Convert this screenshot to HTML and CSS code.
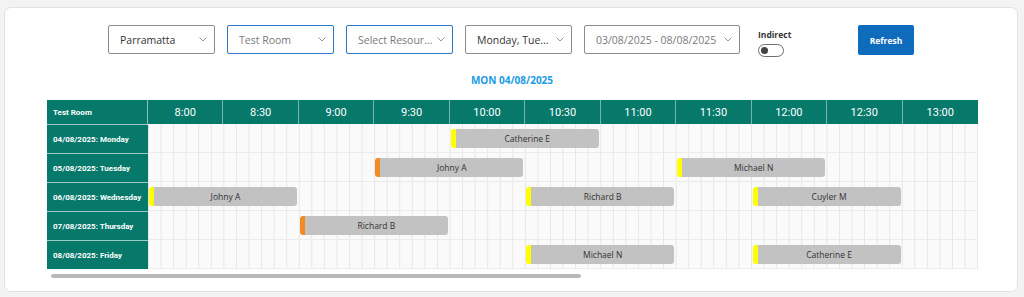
FILE: index.html
```html
<!DOCTYPE html>
<html>
<head>
<meta charset="utf-8">
<link rel="stylesheet" href="styles.css">
</head>
<body>
<div class="card">
  <div class="toolbar">
    <div class="select w107">
      <span class="val">Parramatta</span>
      <svg class="chev" width="8" height="5" viewBox="0 0 8 5"><path d="M0.5 0.5 L4 4 L7.5 0.5" fill="none" stroke="#8a8a8a" stroke-width="0.9"/></svg>
    </div>
    <div class="select w107 focus">
      <span class="val ph">Test Room</span>
      <svg class="chev" width="8" height="5" viewBox="0 0 8 5"><path d="M0.5 0.5 L4 4 L7.5 0.5" fill="none" stroke="#8a8a8a" stroke-width="0.9"/></svg>
    </div>
    <div class="select w107 focus">
      <span class="val ph">Select Resour...</span>
      <svg class="chev" width="8" height="5" viewBox="0 0 8 5"><path d="M0.5 0.5 L4 4 L7.5 0.5" fill="none" stroke="#8a8a8a" stroke-width="0.9"/></svg>
    </div>
    <div class="select w107">
      <span class="val">Monday, Tue...</span>
      <svg class="chev" width="8" height="5" viewBox="0 0 8 5"><path d="M0.5 0.5 L4 4 L7.5 0.5" fill="none" stroke="#8a8a8a" stroke-width="0.9"/></svg>
    </div>
    <div class="select w156">
      <span class="val ph">03/08/2025 - 08/08/2025</span>
      <svg class="chev" width="8" height="5" viewBox="0 0 8 5"><path d="M0.5 0.5 L4 4 L7.5 0.5" fill="none" stroke="#8a8a8a" stroke-width="0.9"/></svg>
    </div>
    <div class="indirect">
      <span class="ind-label">Indirect</span>
      <span class="toggle"><span class="knob"></span></span>
    </div>
    <button class="refresh">Refresh</button>
  </div>

  <div class="daytitle">MON 04/08/2025</div>

  <div class="sched">
    <div class="hrow">
      <div class="hlabel">Test Room</div>
      <div class="htime">8:00</div>
      <div class="htime">8:30</div>
      <div class="htime">9:00</div>
      <div class="htime">9:30</div>
      <div class="htime">10:00</div>
      <div class="htime">10:30</div>
      <div class="htime">11:00</div>
      <div class="htime">11:30</div>
      <div class="htime">12:00</div>
      <div class="htime">12:30</div>
      <div class="htime">13:00</div>
    </div>

    <div class="row">
      <div class="rlabel">04/08/2025: Monday</div>
      <div class="timeline">
        <div class="ev yellow" style="grid-column: 25 / span 12">Catherine E</div>
      </div>
    </div>
    <div class="row">
      <div class="rlabel">05/08/2025: Tuesday</div>
      <div class="timeline">
        <div class="ev orange" style="grid-column: 19 / span 12">Johny A</div>
        <div class="ev yellow" style="grid-column: 43 / span 12">Michael N</div>
      </div>
    </div>
    <div class="row">
      <div class="rlabel">06/08/2025: Wednesday</div>
      <div class="timeline">
        <div class="ev yellow" style="grid-column: 1 / span 12">Johny A</div>
        <div class="ev yellow" style="grid-column: 31 / span 12">Richard B</div>
        <div class="ev yellow" style="grid-column: 49 / span 12">Cuyler M</div>
      </div>
    </div>
    <div class="row">
      <div class="rlabel">07/08/2025: Thursday</div>
      <div class="timeline">
        <div class="ev orange" style="grid-column: 13 / span 12">Richard B</div>
      </div>
    </div>
    <div class="row">
      <div class="rlabel">08/08/2025: Friday</div>
      <div class="timeline">
        <div class="ev yellow" style="grid-column: 31 / span 12">Michael N</div>
        <div class="ev yellow" style="grid-column: 49 / span 12">Catherine E</div>
      </div>
    </div>
    <div class="scrollbar"><div class="thumb"></div></div>
  </div>
</div>
</body>
</html>
```

FILE: styles.css
```css
* { box-sizing: border-box; }
html, body { margin: 0; padding: 0; }
body {
  background: #f3f3f3;
  width: 1024px;
  height: 297px;
  overflow: hidden;
  font-family: "Open Sans", "Noto Sans", sans-serif;
  padding: 7px 6px 0 4px;
}
.card {
  background: #fff;
  border: 1px solid #e2e2e2;
  border-radius: 7px;
  height: 285px;
  padding: 17px 41px 0 41px;
}
.toolbar {
  display: flex;
  align-items: flex-start;
  justify-content: flex-start;
  height: 31px;
  padding-left: 62px;
}
.select {
  height: 29px;
  border: 1px solid #8c8c8c;
  border-radius: 2px;
  display: flex;
  align-items: center;
  padding: 0 7px 0 11px;
  margin-right: 12px;
  font-size: 10.5px;
  color: #333;
  background: #fff;
}
.select.focus { border-color: #2b79c7; }
.w107 { width: 107px; }
.w156 { width: 156px; margin-right: 18px; }
.val { flex: 1; white-space: nowrap; overflow: hidden; }
.val.ph { color: #7a7a7a; }
.chev { flex: none; }
.indirect {
  display: flex;
  flex-direction: column;
  align-items: flex-start;
  width: 100px;
  padding-top: 4px;
}
.ind-label {
  font-size: 8.5px;
  font-weight: 700;
  color: #333;
  line-height: 12px;
}
.toggle {
  margin-top: 3px;
  width: 26px;
  height: 13px;
  border: 1px solid #6e6e6e;
  border-radius: 7px;
  display: flex;
  align-items: center;
  padding-left: 2px;
}
.knob {
  width: 7px;
  height: 7px;
  border-radius: 50%;
  background: #444;
}
.refresh {
  width: 56px;
  height: 30px;
  border: none;
  border-radius: 2px;
  background: #0f6cbd;
  color: #fff;
  font-family: "Open Sans", "Noto Sans", sans-serif;
  font-size: 8.5px;
  font-weight: 700;
  padding: 0;
}
.daytitle {
  text-align: center;
  color: #1a9be6;
  font-weight: 700;
  font-size: 10px;
  line-height: 14px;
  margin-top: 17px;
  padding-left: 2px;
}
.sched {
  margin-top: 13px;
  width: 931px;
  margin-left: 1px;
}
.hrow, .row {
  display: grid;
  grid-template-columns: 101px repeat(11, 1fr);
}
.hrow {
  height: 24px;
  background: #06796b;
}
.hlabel {
  font-family: Roboto, "Liberation Sans", sans-serif;
  color: #fff;
  font-weight: 700;
  font-size: 8px;
  display: flex;
  align-items: center;
  padding-left: 6px;
  border-right: 1px solid rgba(255,255,255,0.55);
}
.htime {
  font-family: Roboto, "Liberation Sans", sans-serif;
  color: #fff;
  font-size: 11px;
  display: flex;
  align-items: center;
  justify-content: center;
  border-right: 1px solid rgba(255,255,255,0.45);
}
.htime:last-child { border-right: none; }
.row { height: 29px; }
.rlabel {
  background: #06796b;
  color: #fff;
  font-family: Roboto, "Liberation Sans", sans-serif;
  font-weight: 700;
  font-size: 8px;
  display: flex;
  align-items: center;
  padding-left: 6px;
  white-space: nowrap;
  border-top: 1px solid rgba(255,255,255,0.6);
}
.timeline {
  grid-column: 2 / span 11;
  display: grid;
  grid-template-columns: repeat(66, 1fr);
  align-items: center;
  background-color: #fafafa;
  background-image: linear-gradient(to right, #e6e6e6 1px, transparent 1px);
  background-size: calc(100% / 66) 100%;
  border-bottom: 1px solid #ececec;
}
.ev {
  height: 19px;
  margin: 0 2px 0 1px;
  background: #c2c2c2;
  border-radius: 3px;
  font-size: 8.5px;
  color: #333;
  display: flex;
  align-items: center;
  justify-content: center;
  padding-left: 5px;
  white-space: nowrap;
}
.ev.yellow { background: linear-gradient(to right, #ffff00 5px, #c2c2c2 5px); }
.ev.orange { background: linear-gradient(to right, #f28a25 5px, #c2c2c2 5px); }
.scrollbar {
  margin-top: 5px;
  height: 4px;
  padding-left: 4px;
}
.thumb {
  width: 530px;
  height: 4px;
  border-radius: 2px;
  background: #b9b9b9;
}
```
